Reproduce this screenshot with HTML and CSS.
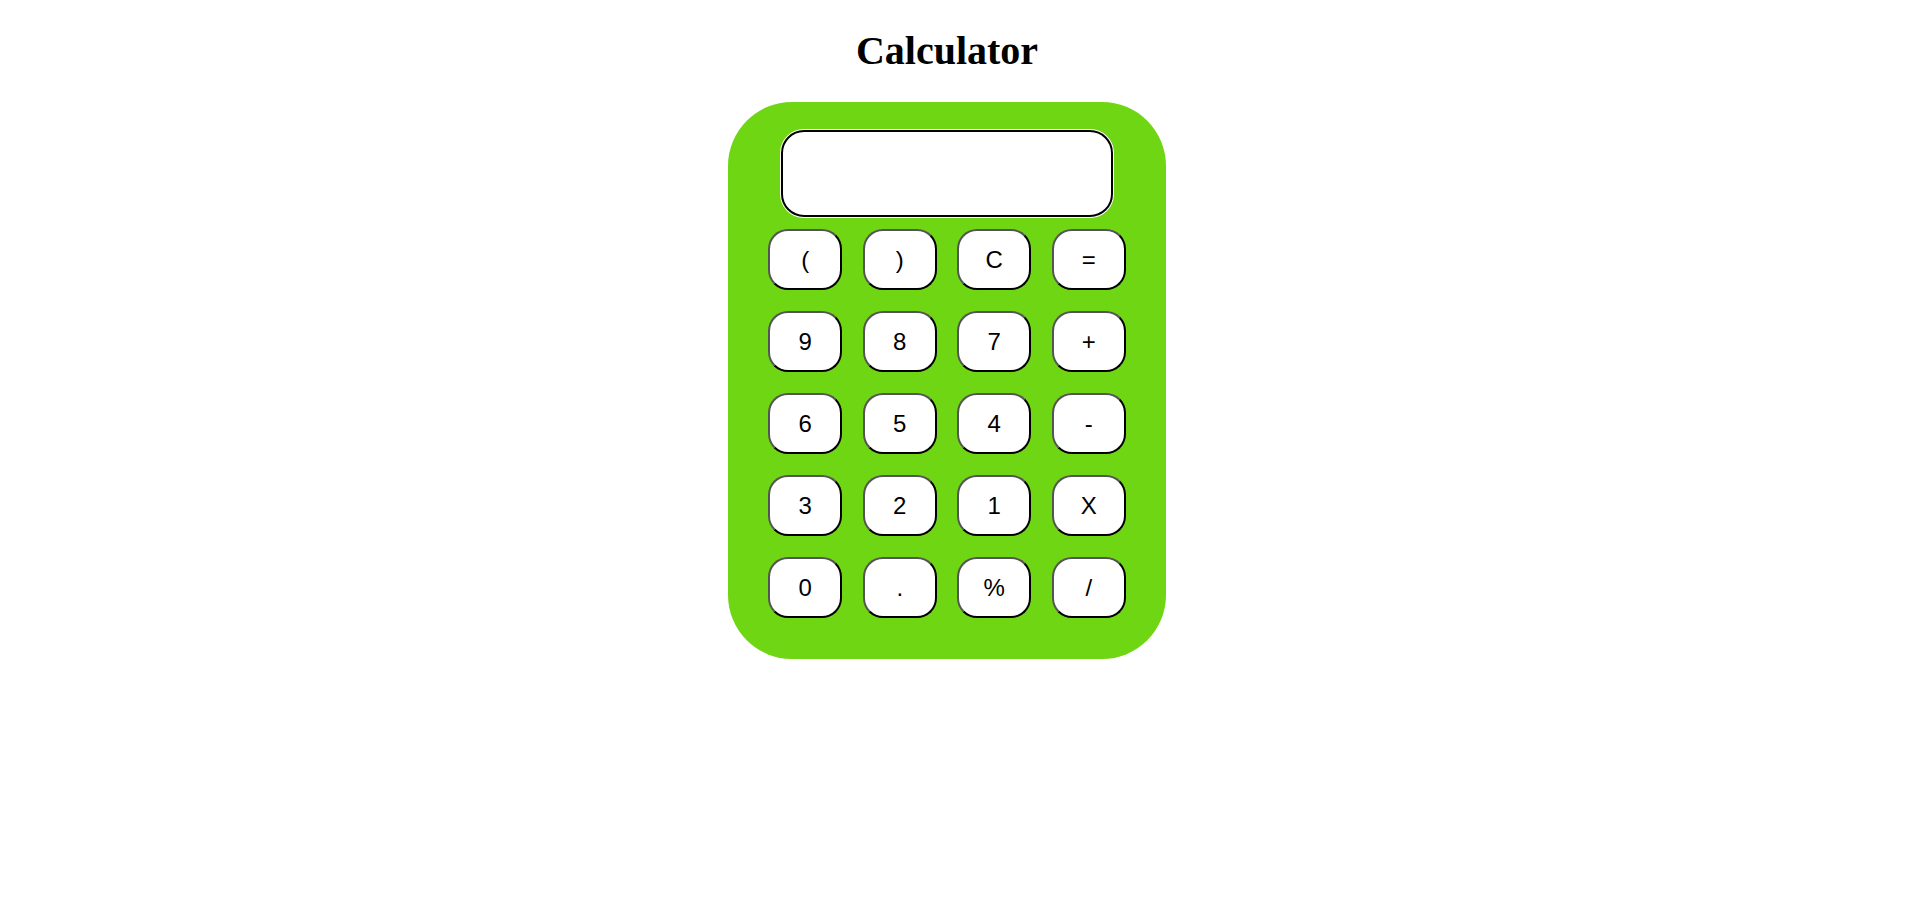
FILE: index.html
```html
<!DOCTYPE html>
<html lang="en">
<head>
<meta charset="utf-8">
<title>Calculator</title>
<link rel="stylesheet" href="styles.css">
</head>
<body>
<div class="page">
  <h1 class="title">Calculator</h1>
  <div class="calc">
    <div class="screen"></div>
    <div class="keys">
      <button class="key">(</button>
      <button class="key">)</button>
      <button class="key">C</button>
      <button class="key">=</button>
      <button class="key">9</button>
      <button class="key">8</button>
      <button class="key">7</button>
      <button class="key">+</button>
      <button class="key">6</button>
      <button class="key">5</button>
      <button class="key">4</button>
      <button class="key">-</button>
      <button class="key">3</button>
      <button class="key">2</button>
      <button class="key">1</button>
      <button class="key">X</button>
      <button class="key">0</button>
      <button class="key">.</button>
      <button class="key">%</button>
      <button class="key">/</button>
    </div>
  </div>
</div>
</body>
</html>
```
FILE: styles.css
```css
html, body {
  margin: 0;
  padding: 0;
  background: #ffffff;
}

.page {
  display: flex;
  flex-direction: column;
  align-items: center;
  padding-right: 13px;
}

.title {
  margin: 28px 0 28px;
  font-family: "Liberation Serif", "Times New Roman", serif;
  font-size: 40px;
  line-height: 46px;
  font-weight: bold;
  color: #000;
  text-align: center;
}

.calc {
  box-sizing: border-box;
  width: 438px;
  height: 557px;
  padding-top: 28px;
  background: #6ed612;
  border-radius: 64px;
  display: flex;
  flex-direction: column;
  align-items: center;
}

.screen {
  box-sizing: border-box;
  width: 332px;
  height: 87px;
  background: #ffffff;
  border: 2px solid #000;
  border-radius: 23px;
  box-shadow: 0 0 0 1px #ffffff;
  margin-bottom: 12px;
}

.keys {
  display: grid;
  grid-template-columns: repeat(4, 74px);
  grid-auto-rows: 61px;
  column-gap: 20.5px;
  row-gap: 21px;
}

.key {
  box-sizing: border-box;
  width: 74px;
  height: 61px;
  margin: 0;
  padding: 0;
  background: #ffffff;
  border: 2px solid;
  border-color: #545454 #000 #000 #545454;
  border-radius: 20px;
  font-family: "Liberation Sans", Arial, sans-serif;
  font-size: 24px;
  color: #000;
  display: flex;
  align-items: center;
  justify-content: center;
}
```
